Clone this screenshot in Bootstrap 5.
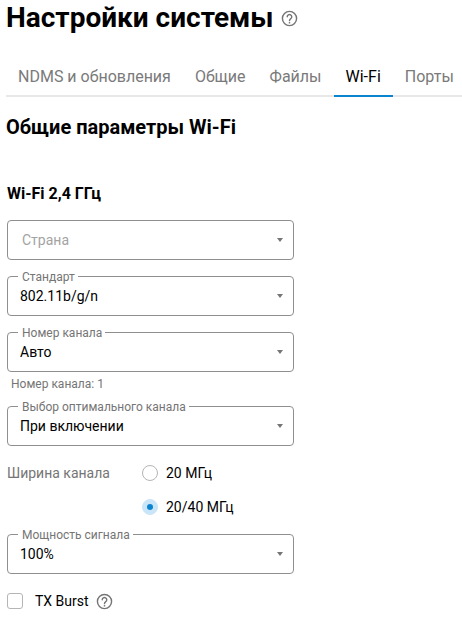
<!DOCTYPE html>
<html lang="ru"><head><meta charset="utf-8"><title>Настройки системы</title>
<link href="https://cdn.jsdelivr.net/npm/bootstrap@5.3.0/dist/css/bootstrap.min.css" rel="stylesheet">
<style>
html,body{height:619px;overflow:hidden}
body{font-family:Roboto,"Liberation Sans",sans-serif;color:#000;background:#fff;font-size:14px;padding:0 0 0 6px}
.page-title{font-size:28px;font-weight:700;line-height:36px;margin:0}
.head-row{height:52px;padding-bottom:16px}
.q-icon{color:#757575;display:block}
.tab-row{height:45px;border-bottom:2px solid #e8e8e8;flex-wrap:nowrap}
.tab-row .nav-link{color:#7a7a7a;font-size:16px;padding:0 12px;height:45px;line-height:50px;border-bottom:2px solid transparent;white-space:nowrap;margin-bottom:-2px;background:none}
.tab-row .nav-link.active{color:#000;border-bottom-color:#0a84d0}
.sec-title{font-size:20px;font-weight:700;line-height:24px;margin:18px 0 0}
.sub-title{font-size:16px;font-weight:700;line-height:20px;margin:45px 0 0 1px}
.sel-box{position:relative;width:287px;height:40px;margin-left:1px;border:1px solid #8f8f8f;border-radius:4px;display:flex;align-items:center;padding:0 12px;font-size:14px;margin-top:16px}
.sel-box::after{content:"";position:absolute;right:10px;top:17px;border-left:3px solid transparent;border-right:3px solid transparent;border-top:4px solid #757575}
.sel-label{position:absolute;left:10px;top:-7px;background:#fff;padding:0 3px 0 4px;font-size:12px;line-height:14px;color:#757575}
.is-blank{color:#a3a3a3;padding-left:14px}
.chan-note{font-size:12px;line-height:14px;color:#757575;margin:5px 0 -1px 5px}
.radio-zone{display:grid;grid-template-columns:135px auto;grid-template-rows:20px 20px;row-gap:14px;margin:17px 0 0 1px;height:55px;font-size:14px;align-items:center;line-height:20px}
.radio-label{color:#757575}
.radio-opt{display:flex;align-items:center;gap:8px;height:16px}
.radio-dot{width:16px;height:16px;border:1px solid #b5b5b5;border-radius:50%;flex:none;background:#fff}
.radio-dot.on{background:#c9e5f7;border-color:#c9e5f7;position:relative}
.radio-dot.on::after{content:"";position:absolute;left:4px;top:4px;width:6px;height:6px;border-radius:50%;background:#0a84d0}
.check-row{display:flex;align-items:center;margin:18px 0 0 1px;font-size:14px;line-height:18px}
.check-sq{width:16px;height:16px;border:1px solid #b5b5b5;border-radius:3px;margin-right:12px}
.check-row .q-icon{margin-left:7px}
.head-row .q-icon{margin-left:7px}
</style></head><body>
<div class="head-row d-flex align-items-center">
<h1 class="page-title">Настройки системы</h1>
<svg class="q-icon" width="17" height="17" viewBox="0 0 24 24" fill="none" stroke="currentColor" stroke-width="2"><circle cx="12" cy="12" r="10"/><path d="M8.8 9.5a3.2 3.2 0 1 1 5 2.7c-1.2.8-1.8 1.4-1.8 2.8" stroke-linecap="round"/><circle cx="12" cy="18" r="1.2" fill="currentColor" stroke="none"/></svg>
</div>
<ul class="nav tab-row">
<li class="nav-item"><a class="nav-link" href="#">NDMS и обновления</a></li>
<li class="nav-item"><a class="nav-link" href="#">Общие</a></li>
<li class="nav-item"><a class="nav-link" href="#">Файлы</a></li>
<li class="nav-item"><a class="nav-link active" href="#">Wi-Fi</a></li>
<li class="nav-item"><a class="nav-link" href="#">Порты</a></li>
</ul>
<h2 class="sec-title">Общие параметры Wi-Fi</h2>
<h3 class="sub-title">Wi-Fi 2,4 ГГц</h3>
<div class="sel-box is-blank">Страна</div>
<div class="sel-box"><span class="sel-label">Стандарт</span>802.11b/g/n</div>
<div class="sel-box"><span class="sel-label">Номер канала</span>Авто</div>
<div class="chan-note">Номер канала: 1</div>
<div class="sel-box"><span class="sel-label">Выбор оптимального канала</span>При включении</div>
<div class="radio-zone">
<span class="radio-label">Ширина канала</span>
<div class="radio-opt"><span class="radio-dot"></span>20 МГц</div>
<span></span>
<div class="radio-opt"><span class="radio-dot on"></span>20/40 МГц</div>
</div>
<div class="sel-box"><span class="sel-label">Мощность сигнала</span>100%</div>
<div class="check-row"><span class="check-sq"></span>TX Burst
<svg class="q-icon" width="17" height="17" viewBox="0 0 24 24" fill="none" stroke="currentColor" stroke-width="2"><circle cx="12" cy="12" r="10"/><path d="M8.8 9.5a3.2 3.2 0 1 1 5 2.7c-1.2.8-1.8 1.4-1.8 2.8" stroke-linecap="round"/><circle cx="12" cy="18" r="1.2" fill="currentColor" stroke="none"/></svg>
</div>
<script src="https://cdn.jsdelivr.net/npm/bootstrap@5.3.0/dist/js/bootstrap.bundle.min.js"></script>
</body></html>
